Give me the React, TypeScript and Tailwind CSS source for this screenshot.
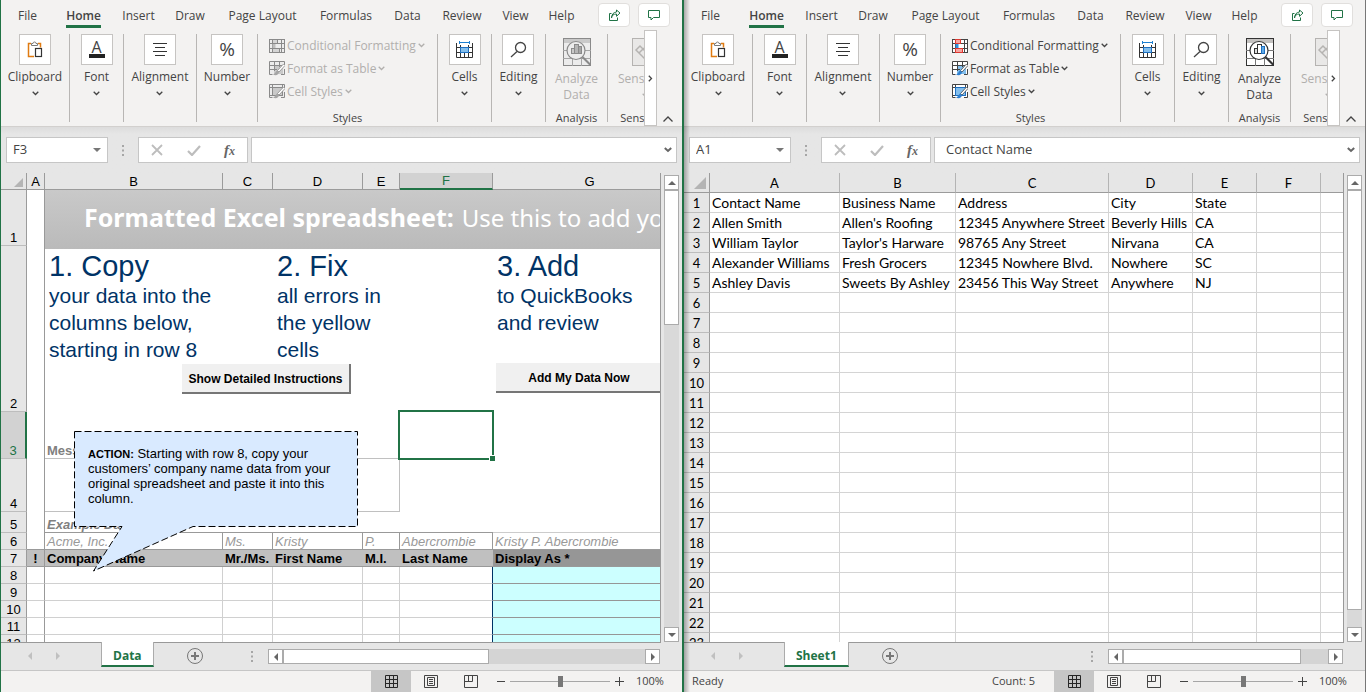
import type { ReactNode } from "react";
import { clsx } from "clsx";

const UI = "font-['Open_Sans','Liberation_Sans',sans-serif]";

const menuTabs = [
  { text: "File", width: "w-[53px]" },
  { text: "Home", width: "w-[59px]" },
  { text: "Insert", width: "w-[51px]" },
  { text: "Draw", width: "w-[52px]" },
  { text: "Page Layout", width: "w-[93px]" },
  { text: "Formulas", width: "w-[74px]" },
  { text: "Data", width: "w-[49px]" },
  { text: "Review", width: "w-[60px]" },
  { text: "View", width: "w-[47px]" },
  { text: "Help", width: "w-[45px]" },
];

/* ---------- icons ---------- */

function Chevron({ className = "" }: { className?: string }) {
  return (
    <svg width="7" height="5" viewBox="0 0 7 5" fill="none" stroke="currentColor" strokeWidth="1.3" className={className}>
      <path d="M.7 .8 3.5 3.5 6.3 .8" />
    </svg>
  );
}

function Triangle({ dir, className = "" }: { dir: "up" | "down" | "left" | "right"; className?: string }) {
  const paths = {
    up: "M0 6 4 2 8 6Z",
    down: "M0 2 4 6 8 2Z",
    left: "M6 0 2 4 6 8Z",
    right: "M2 0 6 4 2 8Z",
  };
  return (
    <svg width="8" height="8" viewBox="0 0 8 8" fill="currentColor" className={className}>
      <path d={paths[dir]} />
    </svg>
  );
}

function ShareIcon() {
  return (
    <svg width="13" height="13" viewBox="0 0 13 13" fill="none" stroke="#217346" strokeWidth="1">
      <path d="M3.5 4.5H1.5v7h8v-3" />
      <path d="M3.5 9C3.8 6.300 5.500 5 8.500 5v2.300L12 4 8.500 1v2C5.500 3.200 3.600 5.500 3.500 9Z" />
    </svg>
  );
}

function CommentIcon() {
  return (
    <svg width="12" height="12" viewBox="0 0 12 12" fill="none" stroke="#217346" strokeWidth="1">
      <path d="M.5 1.500h11v7h-6l-2.500 2.500v-2.500H.5Z" />
    </svg>
  );
}

function PasteIcon() {
  return (
    <svg width="16" height="17" viewBox="0 0 16 17" fill="none">
      <path d="M7 15.500H1.500v-13h2.500M11 2.500h2.500v4" stroke="#e07b12" strokeWidth="1.500" />
      <path d="M4.500 4.500v-2h1.500a1.500 1.500 0 0 1 3 0h1.500v2Z" fill="#fff" stroke="#7a7a7a" />
      <rect x="8.500" y="7.500" width="6" height="8" fill="#fff" stroke="#333" strokeWidth="1.200" />
    </svg>
  );
}

function AlignIcon() {
  return (
    <svg width="16" height="16" viewBox="0 0 16 16" stroke="#333" strokeWidth="1">
      <path d="M1 1.500h14M3 5.500h10M1 9.500h14M3 13.500h10" />
    </svg>
  );
}

function CellsIcon() {
  return (
    <svg width="17" height="17" viewBox="0 0 17 17" fill="none">
      <path d="M3.500 1.500h10M3.500 0v3M13.500 0v3" stroke="#1e7fd0" />
      <path d="M.5 2v14.500h16V2M.5 6.500h16M.5 11.500h16M4.500 4v12M8.500 12v4M12.500 4v12" stroke="#333" />
      <rect x="4.500" y="6.500" width="8" height="5" fill="#83beec" stroke="#1e6fc0" />
    </svg>
  );
}

function SearchIcon() {
  return (
    <svg width="17" height="17" viewBox="0 0 17 17" fill="none" stroke="#444" strokeWidth="1.300">
      <circle cx="10.500" cy="6.500" r="5" />
      <path d="M7 10.500 1 16" />
    </svg>
  );
}

function ConditionalIcon({ off }: { off?: boolean }) {
  const line = off ? "#8a8a8a" : "#444";
  const red = off ? "#8a8a8a" : "#e03a32";
  return (
    <svg width="16" height="14" viewBox="0 0 16 14" fill="none">
      <rect x=".5" y=".5" width="15" height="13" fill={off ? "#ececec" : "#fff"} stroke={line} />
      <path d="M3.500 0v14M12.500 0v14M0 4.500h16M0 9.500h16" stroke={line} />
      <rect x="3.500" y=".5" width="5" height="4" fill={off ? "#d4d4d4" : "#f4a6a2"} stroke={red} />
      <rect x="3.500" y="5" width="3" height="4.500" fill={off ? "#bdbdbd" : "#2f8fdd"} stroke="none" />
      <rect x="3.500" y="9.500" width="7" height="4" fill={off ? "#d4d4d4" : "#f4a6a2"} stroke={red} />
    </svg>
  );
}

function TableBrushIcon({ off, full }: { off?: boolean; full?: boolean }) {
  const line = off ? "#8a8a8a" : "#444";
  const fill = off ? "#c9c9c9" : "#83beec";
  const edge = off ? "#8a8a8a" : "#1e6fc0";
  return (
    <svg width="16" height="15" viewBox="0 0 16 15" fill="none">
      <path d="M.5 .5h15v13H.5Z" fill={off ? "#ececec" : "#fff"} />
      {full ? (
        <>
          <rect x="3.500" y="3.500" width="10" height="8" fill={fill} stroke={edge} />
          <path d="M3.500 0v3M0 3.500h3M13.500 0v3M0 11.500h3" stroke={line} />
        </>
      ) : (
        <>
          <rect x="5" y="5" width="9" height="8" fill={fill} />
          <path d="M5.500 0v10M10.500 0v6M0 4.500h13M0 8.500h8" stroke={line} />
        </>
      )}
      <path d="M15.500 4V.5H.5v13h3M12 13.500h3.500V8" stroke={line} />
      <path d="M14.500 3 8.500 9.500l1.500 1.500L16 4.500Z" fill="#fff" stroke={line} strokeWidth=".8" />
      <path d="M8.500 9.500c-2 .3-1.500 3-4.500 4 2.500 1.500 6 .5 6-2.500Z" fill={off ? "#a5a5a5" : "#2f7fcf"} />
    </svg>
  );
}

function AnalyzeIcon({ off }: { off?: boolean }) {
  const line = off ? "#8a8a8a" : "#333";
  return (
    <svg width="28" height="28" viewBox="0 0 28 28" fill="none">
      <rect x=".5" y=".5" width="27" height="27" fill={off ? "#ececec" : "#fff"} stroke={line} />
      <rect x="1" y="1" width="26" height="4" fill={off ? "#c9c9c9" : "#c4c2c0"} />
      <path d="M0 12.500h5M0 20.500h28M9.500 20v8M18.500 20v8M22 12.500h6" stroke={off ? "#a5a5a5" : "#777"} />
      <circle cx="13" cy="12.500" r="9" fill={off ? "#ececec" : "#fff"} stroke={line} strokeWidth="1.200" />
      <path d="m19.500 19 8 8" stroke={line} strokeWidth="2" />
      <rect x="8.500" y="10.500" width="3" height="5" fill={off ? "#c9c9c9" : "#ddd"} stroke={line} />
      <rect x="11.500" y="6.500" width="4" height="9" fill={off ? "#b5b5b5" : "#fff"} stroke={line} />
      <rect x="15.500" y="8.500" width="3" height="7" fill={off ? "#a5a5a5" : "#5fa9e4"} stroke={off ? line : "#1e6fc0"} />
    </svg>
  );
}

function SensitivityIcon() {
  return (
    <svg width="28" height="28" viewBox="0 0 28 28" fill="none" stroke="#b5b3b1">
      <rect x=".5" y=".5" width="27" height="27" fill="#e9e8e7" />
      <path d="m4 12 4-4 10 10-4 4ZM7 15l5-5" strokeWidth="1.500" />
    </svg>
  );
}

function NormalViewIcon() {
  return (
    <svg width="13" height="13" viewBox="0 0 13 13" fill="none" stroke="#262626">
      <path d="M.5 .5h12v12H.5ZM4.500 0v13M8.500 0v13M0 4.500h13M0 8.500h13" />
    </svg>
  );
}

function PageViewIcon() {
  return (
    <svg width="14" height="13" viewBox="0 0 14 13" fill="none" stroke="#444">
      <path d="M.5 .5h13v12H.5ZM3.500 2.500h7v8h-7ZM5 4.500h4M5 6.500h4M5 8.500h4" />
    </svg>
  );
}

function BreakViewIcon() {
  return (
    <svg width="14" height="13" viewBox="0 0 14 13" fill="none" stroke="#444">
      <path d="M.5 .5h13v12H.5ZM4.500 .5v6M.5 6.500h8V.5" />
    </svg>
  );
}

/* ---------- ribbon ---------- */

function Divider() {
  return <span className="mb-1 w-px shrink-0 bg-[#b8b6b4]" />;
}

function GroupButton({ label, icon, width }: { label: string; icon: ReactNode; width: string }) {
  return (
    <>
      <div className={clsx("flex shrink-0 justify-center", width)}>
        <button className="flex flex-col items-center self-start text-[12px] leading-4 text-[#444]">
          <span className="flex h-[31px] w-8 items-center justify-center border border-[#c6c4c2] bg-white">{icon}</span>
          <span className="mt-1">{label}</span>
          <Chevron className="mt-1.5" />
        </button>
      </div>
      <Divider />
    </>
  );
}

function StyleButton({ text, icon, off }: { text: string; icon: ReactNode; off?: boolean }) {
  return (
    <button
      disabled={off}
      className={clsx("flex h-[23px] items-center gap-0.5 text-[12px]", off ? "text-[#b1afad]" : "text-[#444]")}
    >
      {icon}
      <span>{text}</span>
      <Chevron />
    </button>
  );
}

function Ribbon({ off }: { off?: boolean }) {
  return (
    <header className="bg-[#f3f2f1] text-[12px] text-[#444]">
      <div className="flex h-7">
        <nav className="flex">
          {menuTabs.map((tab) => (
            <button key={tab.text} className={clsx("flex justify-center", tab.width)}>
              <span
                className={clsx(
                  "h-7 pt-2 leading-4",
                  tab.text === "Home" && "border-b-3 border-[#217346] font-semibold"
                )}
              >
                {tab.text}
              </span>
            </button>
          ))}
        </nav>
        <div className="mt-[3px] mr-3 ml-auto flex gap-2">
          <button aria-label="Share" className="flex h-6 w-8 items-center justify-center rounded-sm border border-[#e1dfdd] bg-white">
            <ShareIcon />
          </button>
          <button aria-label="Comments" className="flex h-6 w-8 items-center justify-center rounded-sm border border-[#e1dfdd] bg-white">
            <CommentIcon />
          </button>
        </div>
      </div>

      <div className="flex h-[98px]">
        <div className="mt-1.5 flex min-w-0 flex-1 overflow-hidden">
          <GroupButton label="Clipboard" width="w-[68px]" icon={<PasteIcon />} />
          <GroupButton
            label="Font"
            width="w-[53px]"
            icon={
              <span className="flex flex-col items-center">
                <span className="text-[16px] leading-[13px]">A</span>
                <span className="h-1 w-4 bg-[#222]" />
              </span>
            }
          />
          <GroupButton label="Alignment" width="w-[72px]" icon={<AlignIcon />} />
          <GroupButton label="Number" width="w-[60px]" icon={<span className="text-[19px] leading-none">%</span>} />
          <div className="flex w-[179px] shrink-0 flex-col pl-[11px]">
            <StyleButton text="Conditional Formatting" off={off} icon={<ConditionalIcon off={off} />} />
            <StyleButton text="Format as Table" off={off} icon={<TableBrushIcon off={off} />} />
            <StyleButton text="Cell Styles" off={off} icon={<TableBrushIcon off={off} full />} />
            <div className="mt-auto mr-[11px] text-center text-[11px] leading-4">Styles</div>
          </div>
          <Divider />
          <GroupButton label="Cells" width="w-[53px]" icon={<CellsIcon />} />
          <GroupButton label="Editing" width="w-[53px]" icon={<SearchIcon />} />
          <div className="flex w-[61px] shrink-0 flex-col items-center pt-1">
            <button disabled={off} className={clsx("flex w-12 flex-col items-center leading-4", off && "text-[#b1afad]")}>
              <AnalyzeIcon off={off} />
              <span className="mt-[5px]">Analyze Data</span>
            </button>
            <div className="mt-auto text-[11px] leading-4">Analysis</div>
          </div>
          <Divider />
          <div className="flex w-[76px] shrink-0 flex-col items-center pt-1">
            <button disabled className="flex flex-col items-center leading-4 text-[#b1afad]">
              <SensitivityIcon />
              <span className="mt-[5px]">Sensitivity</span>
              <Chevron className="mt-1.5" />
            </button>
            <div className="mt-auto text-[11px] leading-4">Sensitivity</div>
          </div>
        </div>
        <button aria-label="Scroll ribbon" className="mt-0.5 flex w-[13px] items-center justify-center border border-[#c6c4c2] bg-white">
          <Chevron className="-rotate-90" />
        </button>
        <button aria-label="Collapse ribbon" className="flex w-[25px] items-end justify-center pr-1 pb-1">
          <svg width="10" height="6" viewBox="0 0 10 6" fill="none" stroke="#444" strokeWidth="1.300">
            <path d="M.5 5.500 5 1l4.500 4.500" />
          </svg>
        </button>
      </div>
    </header>
  );
}

function Dots({ className = "" }: { className?: string }) {
  return (
    <svg width="2" height="11" viewBox="0 0 2 11" fill="#a6a6a6" className={className}>
      <path d="M0 0h2v2H0ZM0 4.500h2v2H0ZM0 9h2v2H0Z" />
    </svg>
  );
}

function FormulaBar({ cell, value }: { cell: string; value: string }) {
  return (
    <div className="flex h-[47px] items-start border-t border-[#d2d0ce] bg-linear-to-b from-[#dcdcdc] to-[#e6e6e6] to-15% pt-2.5 pr-[5px] pl-[5px] text-[#444]">
      <div className="flex h-[26px] w-[102px] items-center border border-[#c6c6c6] bg-white pr-1.5">
        <input aria-label="Name box" defaultValue={cell} className="w-full min-w-0 pl-1.5 text-[13px] outline-none" />
        <button aria-label="Open name list">
          <Triangle dir="down" className="text-[#777]" />
        </button>
      </div>
      <Dots className="mx-3.5 mt-2" />
      <div className="flex h-[26px] w-[110px] items-center justify-between border border-[#c6c6c6] bg-white pr-3 pl-3">
        <button aria-label="Cancel">
          <svg width="12" height="12" viewBox="0 0 12 12" stroke="#bdbdbd" strokeWidth="1.800">
            <path d="m1 1 10 10M11 1 1 11" />
          </svg>
        </button>
        <button aria-label="Enter">
          <svg width="14" height="11" viewBox="0 0 14 11" fill="none" stroke="#bdbdbd" strokeWidth="2.200">
            <path d="m1 6 4 4 8-9" />
          </svg>
        </button>
        <button className="font-['Liberation_Serif',serif] text-[15px] leading-none font-bold text-[#666] italic">
          f<span className="text-[12px]">x</span>
        </button>
      </div>
      <div className="ml-[3px] flex h-[26px] min-w-0 flex-1 items-center border border-[#c6c6c6] bg-white pr-1">
        <input aria-label="Formula" defaultValue={value} className="w-full min-w-0 pl-[11px] text-[13px] outline-none" />
        <button aria-label="Expand formula bar">
          <svg width="8" height="6" viewBox="0 0 8 6" fill="none" stroke="#666" strokeWidth="2">
            <path d="m.8 1 3.200 3L7.200 1" />
          </svg>
        </button>
      </div>
    </div>
  );
}

/* ---------- scroll bars and footer ---------- */

const arrowBox = "flex h-[15px] w-[15px] shrink-0 items-center justify-center border border-[#ababab] bg-white text-[#666]";

function VerticalScroll({ thumb }: { thumb: string }) {
  return (
    <div className="flex w-[21px] shrink-0 flex-col items-center bg-[#e6e6e6] pt-0.5 pb-px">
      <button aria-label="Scroll up" className={arrowBox}>
        <Triangle dir="up" />
      </button>
      <div className="w-[15px] flex-1 bg-[#d9d9d9]">
        <div className={clsx("w-full border border-[#ababab] bg-white", thumb)} />
      </div>
      <button aria-label="Scroll down" className={arrowBox}>
        <Triangle dir="down" />
      </button>
    </div>
  );
}

function SheetBar({ name, width, thumb }: { name: string; width: string; thumb: string }) {
  return (
    <div className="flex h-7 items-start border-b border-[#c6c6c6] bg-[#e6e6e6]">
      <div className="flex w-[100px] shrink-0 gap-5 pt-[9px] pl-[25px] text-[#c0c0c0]">
        <button aria-label="Previous sheet">
          <Triangle dir="left" />
        </button>
        <button aria-label="Next sheet">
          <Triangle dir="right" />
        </button>
      </div>
      <button
        className="relative -mt-px h-[25px] border-x border-b-2 border-x-[#ababab] border-b-[#217346] bg-white px-[11px] pt-1 text-[12px] leading-4 font-bold text-[#217346]"
      >
        {name}
      </button>
      <button aria-label="New sheet" className="mt-[5px] ml-[33px]">
        <svg width="16" height="16" viewBox="0 0 16 16" fill="none" stroke="#777">
          <circle cx="8" cy="8" r="7.500" />
          <path d="M8 4v8M4 8h8" strokeWidth="2" />
        </svg>
      </button>
      <Dots className="mt-2 mr-[15px] ml-auto" />
      <div className={clsx("mt-1.5 mr-[22px] flex h-[15px]", width)}>
        <button aria-label="Scroll left" className={arrowBox}>
          <Triangle dir="left" />
        </button>
        <div className="flex-1 bg-[#d4d4d4]">
          <div className={clsx("h-full border border-[#ababab] bg-white", thumb)} />
        </div>
        <button aria-label="Scroll right" className={arrowBox}>
          <Triangle dir="right" />
        </button>
      </div>
    </div>
  );
}

function StatusBar({ ready, count }: { ready?: string; count?: string }) {
  return (
    <footer className="flex h-[21px] items-center bg-[#f3f2f1] text-[11px] text-[#444]">
      <span className="pl-2">{ready}</span>
      <span className="mr-[19px] ml-auto">{count}</span>
      <button aria-label="Normal view" className="flex h-full w-10 items-center justify-center bg-[#c6c6c6]">
        <NormalViewIcon />
      </button>
      <button aria-label="Page layout view" className="flex h-full w-10 items-center justify-center">
        <PageViewIcon />
      </button>
      <button aria-label="Page break preview" className="flex h-full w-10 items-center justify-center">
        <BreakViewIcon />
      </button>
      <div className="flex w-[191px] items-center pl-1.5">
        <button aria-label="Zoom out">
          <svg width="8" height="9" viewBox="0 0 8 9" stroke="#444">
            <path d="M0 4.500h8" />
          </svg>
        </button>
        <input
          type="range"
          aria-label="Zoom"
          defaultValue={50}
          className="mx-[5px] h-[11px] w-[100px] appearance-none bg-transparent [&::-webkit-slider-runnable-track]:h-px [&::-webkit-slider-runnable-track]:bg-[#a6a6a6] [&::-webkit-slider-thumb]:-mt-[5px] [&::-webkit-slider-thumb]:h-[11px] [&::-webkit-slider-thumb]:w-[5px] [&::-webkit-slider-thumb]:appearance-none [&::-webkit-slider-thumb]:bg-[#777]"
        />
        <button aria-label="Zoom in">
          <svg width="9" height="9" viewBox="0 0 9 9" stroke="#444">
            <path d="M0 4.500h9M4.500 0v9" />
          </svg>
        </button>
        <span className="ml-3">100%</span>
      </div>
    </footer>
  );
}

/* ---------- left sheet ---------- */

const headCell = "border-b border-[#9b9b9b] bg-[#e6e6e6] p-0 text-center align-bottom font-normal";
const rowHead = "border-r border-b border-r-[#9b9b9b] border-b-[#bdbdbd] bg-[#e6e6e6] p-0 text-center align-bottom font-normal";
const exampleCell = "overflow-hidden border-r border-b border-[#999] p-0 pl-0.5 text-left align-bottom text-[#999] italic";
const titleCell = "overflow-hidden border-b border-[#999] p-0 pl-0.5 text-left align-bottom font-bold";

function StepCell({ title, lines }: { title: string; lines: string[] }) {
  return (
    <>
      <div className="text-[29px] leading-8">{title}</div>
      {lines.map((line) => (
        <div key={line} className="text-[21px] leading-[27px] whitespace-nowrap">
          {line}
        </div>
      ))}
    </>
  );
}

function TemplateSheet() {
  return (
    <div className="relative min-w-0 flex-1 overflow-hidden border-r border-b border-[#999] bg-white font-['Liberation_Sans',Arial,sans-serif]">
      <table className="w-full table-fixed border-separate border-spacing-0 text-[13px] leading-[14px] text-black">
        <colgroup>
          <col className="w-[26px]" />
          <col className="w-[18px]" />
          <col className="w-[178px]" />
          <col className="w-[50px]" />
          <col className="w-[90px]" />
          <col className="w-[37px]" />
          <col className="w-[93px]" />
          <col />
        </colgroup>
        <thead>
          <tr className="h-[17px]">
            <th className={clsx(headCell, "border-r")}>
              <svg width="9" height="9" viewBox="0 0 9 9" fill="#b4b4b4" className="mb-0.5 ml-[13px]">
                <path d="M9 0v9H0Z" />
              </svg>
            </th>
            {["A", "B", "C", "D", "E"].map((c) => (
              <th key={c} className={clsx(headCell, "border-r")}>
                {c}
              </th>
            ))}
            <th className="border-r border-b-2 border-r-[#9b9b9b] border-b-[#217346] bg-[#d2d2d2] p-0 text-center align-bottom font-normal text-[#217346]">F</th>
            <th className={headCell}>
              <span className="pl-[26px]">G</span>
            </th>
          </tr>
        </thead>
        <tbody>
          <tr className="h-14">
            <th className={rowHead}>1</th>
            <td className="border-r border-[#999]" />
            <td colSpan={6} />
          </tr>
          <tr className="h-[166px] text-[#003366]">
            <th className={clsx(rowHead, "text-black")}>2</th>
            <td className="border-r border-[#999]" />
            <td colSpan={2} className="p-0 pt-1 pl-1 align-top">
              <StepCell title="1. Copy" lines={["your data into the", "columns below,", "starting in row 8"]} />
            </td>
            <td colSpan={3} className="p-0 pt-1 pl-1 align-top">
              <StepCell title="2. Fix" lines={["all errors in", "the yellow", "cells"]} />
            </td>
            <td className="p-0 pt-1 pl-1 align-top">
              <StepCell title="3. Add" lines={["to QuickBooks", "and review"]} />
            </td>
          </tr>
          <tr className="h-[47px]">
            <th className="border-r-2 border-b border-r-[#217346] border-b-[#bdbdbd] bg-[#d2d2d2] p-0 text-center align-bottom font-normal text-[#217346]">3</th>
            <td className="border-r border-[#999]" />
            <td colSpan={4} className="border-b border-[#c0c0c0] p-0 pl-0.5 align-bottom font-bold text-[#808080]">
              Messages
            </td>
            <td colSpan={2} />
          </tr>
          <tr className="h-[53px]">
            <th className={rowHead}>4</th>
            <td className="border-r border-[#999]" />
            <td colSpan={4} className="border-r border-b border-[#c0c0c0]" />
            <td colSpan={2} />
          </tr>
          <tr className="h-[21px]">
            <th className={rowHead}>5</th>
            <td className="border-r border-[#999]" />
            <td colSpan={5} className="border-b border-[#999] p-0 pl-0.5 align-bottom font-bold text-[#808080] italic">
              Example Data
            </td>
            <td className="border-b border-[#ccc] p-0" />
          </tr>
          <tr className="h-[17px]">
            <th className={rowHead}>6</th>
            <td className="border-r border-b border-[#999] p-0" />
            {["Acme, Inc.", "Ms.", "Kristy", "P.", "Abercrombie"].map((text) => (
              <td key={text} className={exampleCell}>
                {text}
              </td>
            ))}
            <td className="border-b border-[#999] p-0 pl-0.5 align-bottom text-[#999] italic">Kristy P. Abercrombie</td>
          </tr>
          <tr className="h-[17px]">
            <th className={rowHead}>7</th>
            <th className="border-r border-b border-[#999] bg-[#c0c0c0] p-0 align-bottom">!</th>
            {["Company Name", "Mr./Ms.", "First Name", "M.I.", "Last Name"].map((text) => (
              <th key={text} className={clsx(titleCell, "bg-[#c0c0c0] whitespace-nowrap")}>
                {text}
              </th>
            ))}
            <th className={clsx(titleCell, "bg-[#969696]")}>Display As *</th>
          </tr>
          {[8, 9, 10, 11, 12].map((n) => (
            <tr key={n} className="h-[17px]">
              <th className={rowHead}>{n}</th>
              <td className="border-r border-b border-r-[#999] border-b-[#d0d0d0] p-0" />
              {["B", "C", "D", "E"].map((c) => (
                <td key={c} className="border-r border-b border-[#d0d0d0] p-0" />
              ))}
              <td className="border-r border-b border-r-[#003366] border-b-[#d0d0d0] p-0" />
              <td className="border-b border-[#969696] bg-[#ccffff] p-0" />
            </tr>
          ))}
        </tbody>
      </table>

      {/* floating objects over the cells */}
      <div className="absolute top-[17px] right-0 left-11 flex h-[59px] items-center overflow-hidden bg-linear-to-b from-[#c9c9c9] to-[#bababa] pb-1 pl-[39px] font-['Noto_Sans',sans-serif] text-[25px] whitespace-nowrap text-white">
        <b>Formatted Excel spreadsheet:</b>
        <span className="ml-2 text-[24px]">Use this to add your data</span>
      </div>
      <button className="absolute top-[191px] left-[181px] h-[30px] w-[169px] border-r-2 border-b-2 border-[#767676] bg-[#f0f0f0] pt-0.5 text-[12px] font-bold text-black">
        Show Detailed Instructions
      </button>
      <button className="absolute top-[190px] left-[495px] h-[30px] w-[166px] border-b-2 border-[#767676] bg-[#f0f0f0] pt-0.5 text-[12px] font-bold text-black">
        Add My Data Now
      </button>
      <div className="absolute top-[237px] left-[397px] h-[50px] w-24 border-2 border-[#217346]">
        <span className="absolute -right-[3px] -bottom-[3px] h-1.5 w-1.5 border-t border-l border-white bg-[#217346]" />
      </div>
      <div className="absolute top-[258px] left-[73px] w-[285px] pt-[15px] pr-3 pl-3.5 text-[13px] leading-[15px] text-black">
        <svg width="285" height="141" viewBox="0 0 285 141" fill="#d9eaff" stroke="#000" strokeDasharray="7 3" className="absolute top-0 left-0">
          <path d="M.5 .5H283.500V95.500H119L19.500 140 48 95.500H.5Z" />
        </svg>
        <p className="relative">
          <b className="text-[11px] leading-none">ACTION:</b> Starting with row 8, copy your customers’ company name data from your original spreadsheet and paste it into this column.
        </p>
      </div>
    </div>
  );
}

/* ---------- right sheet ---------- */

const contacts = [
  ["Contact Name", "Business Name", "Address", "City", "State"],
  ["Allen Smith", "Allen's Roofing", "12345 Anywhere Street", "Beverly Hills", "CA"],
  ["William Taylor", "Taylor's Harware", "98765 Any Street", "Nirvana", "CA"],
  ["Alexander Williams", "Fresh Grocers", "12345 Nowhere Blvd.", "Nowhere", "SC"],
  ["Ashley Davis", "Sweets By Ashley", "23456 This Way Street", "Anywhere", "NJ"],
];

function ContactSheet() {
  const rows = Array.from({ length: 23 }, (_, i) => contacts[i] ?? []);

  return (
    <div className="min-w-0 flex-1 overflow-hidden border-r border-b border-[#999] bg-white">
      <table className="w-full table-fixed border-separate border-spacing-0 font-['Lato','Open_Sans',sans-serif] text-[14px] leading-[18px] text-black">
        <colgroup>
          <col className="w-[26px]" />
          <col className="w-[130px]" />
          <col className="w-[116px]" />
          <col className="w-[153px]" />
          <col className="w-[84px]" />
          <col className="w-[64px]" />
          <col className="w-[64px]" />
          <col />
        </colgroup>
        <thead className="text-[13px]">
          <tr className="h-5">
            <th className={clsx(headCell, "border-r")}>
              <svg width="12" height="12" viewBox="0 0 12 12" fill="#b4b4b4" className="mb-[3px] ml-[10px]">
                <path d="M12 0v12H0Z" />
              </svg>
            </th>
            {["A", "B", "C", "D", "E", "F"].map((c) => (
              <th key={c} className={clsx(headCell, "border-r border-r-[#b4b4b4]")}>
                {c}
              </th>
            ))}
            <th className={headCell} />
          </tr>
        </thead>
        <tbody>
          {rows.map((row, i) => (
            <tr key={i} className="h-5">
              <th className={clsx(rowHead, "text-[13px]")}>{i + 1}</th>
              {[0, 1, 2, 3, 4, 5].map((c) => (
                <td key={c} className="border-r border-b border-[#d4d4d4] p-0 pl-0.5 align-bottom whitespace-nowrap">
                  {row[c]}
                </td>
              ))}
              <td className="border-b border-[#d4d4d4] p-0" />
            </tr>
          ))}
        </tbody>
      </table>
    </div>
  );
}

export default function App() {
  return (
    <main className={clsx("flex h-screen overflow-hidden bg-[#e6e6e6]", UI)}>
      <section className="flex min-w-0 flex-1 flex-col border-x border-[#217346]">
        <Ribbon off />
        <FormulaBar cell="F3" value="" />
        <div className="flex min-h-0 flex-1">
          <TemplateSheet />
          <VerticalScroll thumb="h-[31%]" />
        </div>
        <SheetBar name="Data" width="w-[392px]" thumb="w-[57%]" />
        <StatusBar />
      </section>

      <section className="relative flex min-w-0 flex-1 flex-col border-x border-r-[#777] border-l-[#217346]">
        <Ribbon />
        <FormulaBar cell="A1" value="Contact Name" />
        <div className="flex min-h-0 flex-1">
          <ContactSheet />
          <VerticalScroll thumb="h-[96%]" />
        </div>
        <SheetBar name="Sheet1" width="w-[235px]" thumb="w-[87%]" />
        <StatusBar ready="Ready" count="Count: 5" />
        {/* shadow cast by the window on the left */}
        <div className="pointer-events-none absolute inset-y-0 left-0 w-1.5 bg-linear-to-r from-black/30 to-transparent" />
      </section>
    </main>
  );
}
